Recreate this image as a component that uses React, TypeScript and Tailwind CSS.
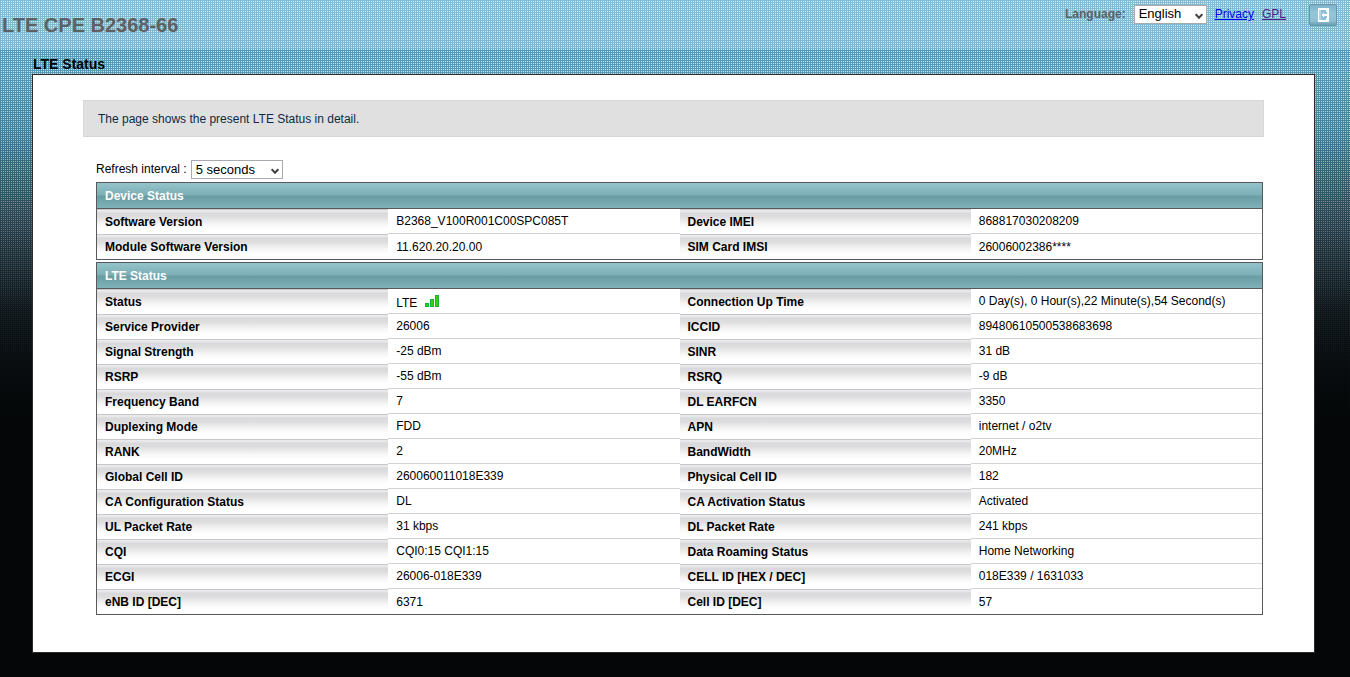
import { useState } from "react";

type Row = [string, string, string, string];

const DEVICE_ROWS: Row[] = [
  ["Software Version", "B2368_V100R001C00SPC085T", "Device IMEI", "868817030208209"],
  ["Module Software Version", "11.620.20.20.00", "SIM Card IMSI", "26006002386****"],
];

const LTE_ROWS: Row[] = [
  ["Status", "LTE", "Connection Up Time", "0 Day(s), 0 Hour(s),22 Minute(s),54 Second(s)"],
  ["Service Provider", "26006", "ICCID", "89480610500538683698"],
  ["Signal Strength", "-25 dBm", "SINR", "31 dB"],
  ["RSRP", "-55 dBm", "RSRQ", "-9 dB"],
  ["Frequency Band", "7", "DL EARFCN", "3350"],
  ["Duplexing Mode", "FDD", "APN", "internet / o2tv"],
  ["RANK", "2", "BandWidth", "20MHz"],
  ["Global Cell ID", "260060011018E339", "Physical Cell ID", "182"],
  ["CA Configuration Status", "DL", "CA Activation Status", "Activated"],
  ["UL Packet Rate", "31 kbps", "DL Packet Rate", "241 kbps"],
  ["CQI", "CQI0:15 CQI1:15", "Data Roaming Status", "Home Networking"],
  ["ECGI", "26006-018E339", "CELL ID [HEX / DEC]", "018E339 / 1631033"],
  ["eNB ID [DEC]", "6371", "Cell ID [DEC]", "57"],
];

const SignalBars = () => (
  <svg width="14" height="12" viewBox="0 0 14 12" className="mb-1" shapeRendering="crispEdges" aria-label="Signal">
    <g fill="#33d400" stroke="#14b13c">
      <rect x="0.5" y="8.5" width="3" height="3" />
      <rect x="5.5" y="4.5" width="3" height="7" />
      <rect x="10.5" y="0.5" width="3" height="11" />
    </g>
  </svg>
);

const LogoutIcon = () => (
  <svg width="11" height="14" viewBox="0 0 11 14" shapeRendering="crispEdges">
    <rect width="11" height="14" fill="#ffffff" />
    <path d="M1 2H8V4H9V10H8V12H1Z" fill="#8fc1d6" />
    <path d="M1 2H3V12H1Z" fill="#b4d6e3" />
    <path d="M3 7L6 4V6H9V8H6V10Z" fill="#ffffff" />
  </svg>
);

interface SelectProps {
  id: string;
  options: string[];
  className: string;
}

const Select = ({ id, options, className }: SelectProps) => {
  const [value, setValue] = useState(options[0]);

  return (
    <span className="relative inline-flex">
      <select
        id={id}
        value={value}
        onChange={(e) => setValue(e.target.value)}
        className={`h-[19px] appearance-none border border-[#a9a9b0] bg-white pl-1 text-[13px] leading-4 text-black ${className}`}
      >
        {options.map((o) => (
          <option key={o}>{o}</option>
        ))}
      </select>
      <svg width="8" height="7" viewBox="0 0 8 7" className="pointer-events-none absolute right-1 top-2">
        <path d="M0.7 1.2L4 4.7L7.3 1.2" fill="none" stroke="#444444" strokeWidth="2" />
      </svg>
    </span>
  );
};

const LABEL =
  "h-[25px] border-t border-[#c6c6cb] bg-[linear-gradient(#ebebed_0px,#e6e6e9_2px,#d9d9dc_3px,#dededf_7px,#f6f6f7_14px,#ffffff_19px)] px-2 text-left font-bold";
const VALUE = "h-[25px] border-b border-[#d3d3d3] px-2 pb-px group-last:border-b-0 group-last:pb-0";

const StatusTable = ({ title, rows }: { title: string; rows: Row[] }) => (
  <table className="w-full table-fixed border-separate border-spacing-0 border border-[#58595b] text-xs leading-4 text-black">
    <thead>
      <tr>
        <th
          colSpan={4}
          className="h-[26px] border-b border-[#58595b] bg-[linear-gradient(#95c3ca_0%,#7eb0b7_46%,#6a9ca5_54%,#80b2b8_100%)] px-2 text-left font-bold text-white"
        >
          {title}
        </th>
      </tr>
    </thead>
    <tbody>
      {rows.map(([label, value, label2, value2]) => (
        <tr key={label} className="group">
          <th scope="row" className={LABEL}>{label}</th>
          <td className={VALUE}>
            {label === "Status" ? (
              <span className="flex items-end gap-2 pt-1">
                {value}
                <SignalBars />
              </span>
            ) : (
              value
            )}
          </td>
          <th scope="row" className={LABEL}>{label2}</th>
          <td className={VALUE}>{value2}</td>
        </tr>
      ))}
    </tbody>
  </table>
);

// dark fade on top, 2px dot grid in the middle, blue base below
const BACKDROP =
  "bg-[linear-gradient(to_bottom,transparent_70px,rgba(4,6,7,0.1)_130px,rgba(4,6,7,0.3)_190px,rgba(4,6,7,0.6)_250px,rgba(4,6,7,0.85)_310px,rgba(4,6,7,0.96)_370px,#040607_430px),conic-gradient(from_90deg,rgba(255,255,255,0.7)_25%,transparent_0),linear-gradient(to_bottom,#83bcd3_0px,#7fb5ca_49px,#559ab5_50px,#5899b2_75px,#4a8fa6_130px,#457892_200px)] bg-[length:100%_100%,2px_2px,100%_100%]";

const App = () => {
  return (
    <div className={`min-h-screen pb-6 font-['Liberation_Sans',Arial,sans-serif] ${BACKDROP}`}>
      <header className="flex h-[54px] items-start justify-between pl-0.5 pr-[13px]">
        <h1 className="pt-[13px] text-xl leading-6 font-bold text-[#5f6062]">LTE CPE B2368-66</h1>
        <div className="flex items-start pt-1 text-xs leading-5">
          <label htmlFor="language" className="mr-2 font-bold text-[#5f6062]">Language:</label>
          <span className="mr-2 flex h-5 items-center">
            <Select id="language" options={["English", "Deutsch", "Polski"]} className="w-[73px]" />
          </span>
          <a href="#privacy" className="mr-2 text-[#0000ee] underline">Privacy</a>
          <a href="#gpl" className="mr-[23px] text-[#551a8b] underline">GPL</a>
          <button
            type="button"
            aria-label="Logout"
            className="flex h-[22px] w-7 items-center justify-center rounded-xs border border-[#6a94ab] bg-[linear-gradient(#7fb3ca,#95c5d9_40%,#8fbfd3_80%,#6e9bb2)]"
          >
            <LogoutIcon />
          </button>
        </div>
      </header>

      <main className="ml-8 mr-[35px]">
        <h2 className="pl-px text-sm leading-5 font-bold text-black">LTE Status</h2>
        <div className="border border-[#2b2b2b] bg-white px-[50px] pt-[25px] pb-[37px]">
          <p className="border border-dotted border-[#cfcfcf] bg-[#e0e0e0] px-[14px] pt-[10px] pb-2 text-xs leading-[17px] text-[#0b2a45]">
            The page shows the present LTE Status in detail.
          </p>
          <div className="mt-[23px] mr-px ml-[13px]">
            <div className="mb-[3px] flex items-center gap-1 text-xs leading-[19px] text-black">
              <label htmlFor="interval">Refresh interval :</label>
              <Select id="interval" options={["5 seconds", "10 seconds", "30 seconds"]} className="w-[92px]" />
            </div>
            <div className="flex flex-col gap-0.5">
              <StatusTable title="Device Status" rows={DEVICE_ROWS} />
              <StatusTable title="LTE Status" rows={LTE_ROWS} />
            </div>
          </div>
        </div>
      </main>
    </div>
  );
};

export default App;
